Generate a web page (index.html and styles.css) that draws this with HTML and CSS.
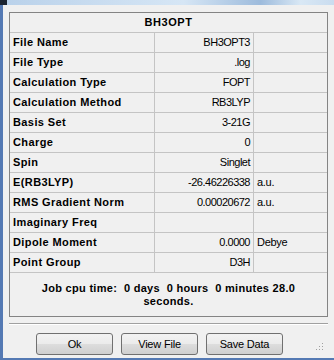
FILE: index.html
```html
<!DOCTYPE html>
<html lang="en">
<head>
    <meta charset="UTF-8">
    <title>BH3OPT</title>
    <link rel="stylesheet" href="styles.css">
</head>
<body>
    <div class="window">
        <div class="titlebar"><span class="app-icon"></span></div>
        <div class="panel">
            <div class="row head">BH3OPT</div>
            <div class="row"><div class="label">File Name</div><div class="value">BH3OPT3</div><div class="unit"></div></div>
            <div class="row"><div class="label">File Type</div><div class="value">.log</div><div class="unit"></div></div>
            <div class="row"><div class="label">Calculation Type</div><div class="value">FOPT</div><div class="unit"></div></div>
            <div class="row"><div class="label">Calculation Method</div><div class="value">RB3LYP</div><div class="unit"></div></div>
            <div class="row"><div class="label">Basis Set</div><div class="value">3-21G</div><div class="unit"></div></div>
            <div class="row"><div class="label">Charge</div><div class="value">0</div><div class="unit"></div></div>
            <div class="row"><div class="label">Spin</div><div class="value">Singlet</div><div class="unit"></div></div>
            <div class="row"><div class="label">E(RB3LYP)</div><div class="value">-26.46226338</div><div class="unit">a.u.</div></div>
            <div class="row"><div class="label">RMS Gradient Norm</div><div class="value">0.00020672</div><div class="unit">a.u.</div></div>
            <div class="row"><div class="label">Imaginary Freq</div><div class="value"></div><div class="unit"></div></div>
            <div class="row"><div class="label">Dipole Moment</div><div class="value">0.0000</div><div class="unit">Debye</div></div>
            <div class="row"><div class="label">Point Group</div><div class="value">D3H</div><div class="unit"></div></div>
            <div class="cpu">Job cpu time:  0 days  0 hours  0 minutes 28.0 seconds.</div>
        </div>
        <div class="separator"></div>
        <div class="buttons">
            <button class="btn">Ok</button>
            <button class="btn">View File</button>
            <button class="btn">Save Data</button>
        </div>
        <svg class="grip" width="8" height="8" viewBox="0 0 8 8">
            <rect x="6" y="0" width="1" height="1" fill="#a0a0a0"/>
            <rect x="3" y="3" width="1" height="1" fill="#a0a0a0"/>
            <rect x="6" y="3" width="1" height="1" fill="#a0a0a0"/>
            <rect x="0" y="6" width="1" height="1" fill="#a0a0a0"/>
            <rect x="3" y="6" width="1" height="1" fill="#a0a0a0"/>
            <rect x="6" y="6" width="1" height="1" fill="#a0a0a0"/>
        </svg>
    </div>
</body>
</html>
```

FILE: styles.css
```css
body {
    margin: 0;
    font-family: "Liberation Sans", Arial, sans-serif;
    font-size: 11px;
    color: #000;
    background: #f0f0f0;
}
.window {
    position: relative;
    width: 334px;
    height: 360px;
    box-sizing: border-box;
    border-left: 3px solid #5479b3;
    border-bottom: 2px solid #5479b3;
    background: #f0f0f0;
}
.titlebar {
    height: 5px;
    margin-left: -3px;
    background: linear-gradient(to right, #b9d1ea, #d6e6f5 55%, #9dbbdc 78%, #d9e8f5 90%, #c9dcef);
}
.app-icon {
    display: block;
    width: 7px;
    height: 5px;
    background: #1c2430;
}
.panel {
    margin: 7px 6px 0 6px;
    border: 1px solid #848484;
}
.row {
    display: grid;
    grid-template-columns: 145px 99px 1fr;
    height: 20px;
    box-sizing: border-box;
    border-bottom: 1px solid #c4c4c4;
    line-height: 19px;
    white-space: nowrap;
}
.row.head {
    display: block;
    text-align: center;
    font-weight: bold;
    letter-spacing: 0.6px;
}
.label {
    border-right: 1px solid #c4c4c4;
    padding-left: 3px;
    font-weight: bold;
    letter-spacing: 0.4px;
}
.value {
    border-right: 1px solid #c4c4c4;
    padding-right: 3px;
    text-align: right;
    letter-spacing: -0.5px;
}
.unit {
    padding-left: 3px;
    letter-spacing: -0.3px;
}
.cpu {
    height: 43px;
    box-sizing: border-box;
    padding: 0 26px;
    display: flex;
    align-items: center;
    justify-content: center;
    text-align: center;
    font-weight: bold;
    line-height: 13px;
    white-space: pre-wrap;
    letter-spacing: 0.3px;
}
.separator {
    margin: 6px 6px 0 6px;
    border-top: 1px solid #a0a0a0;
    border-bottom: 1px solid #ffffff;
}
.buttons {
    display: flex;
    gap: 8px;
    margin: 8px 0 0 33px;
}
.btn {
    width: 77px;
    height: 22px;
    padding: 0;
    border: 1px solid #707070;
    border-radius: 3px;
    background: linear-gradient(#f2f2f2 0%, #ebebeb 50%, #dddddd 51%, #cfcfcf 100%);
    font-family: "Liberation Sans", Arial, sans-serif;
    font-size: 11px;
    color: #000;
    letter-spacing: -0.2px;
}
.grip {
    position: absolute;
    right: 10px;
    bottom: 7px;
}
```
